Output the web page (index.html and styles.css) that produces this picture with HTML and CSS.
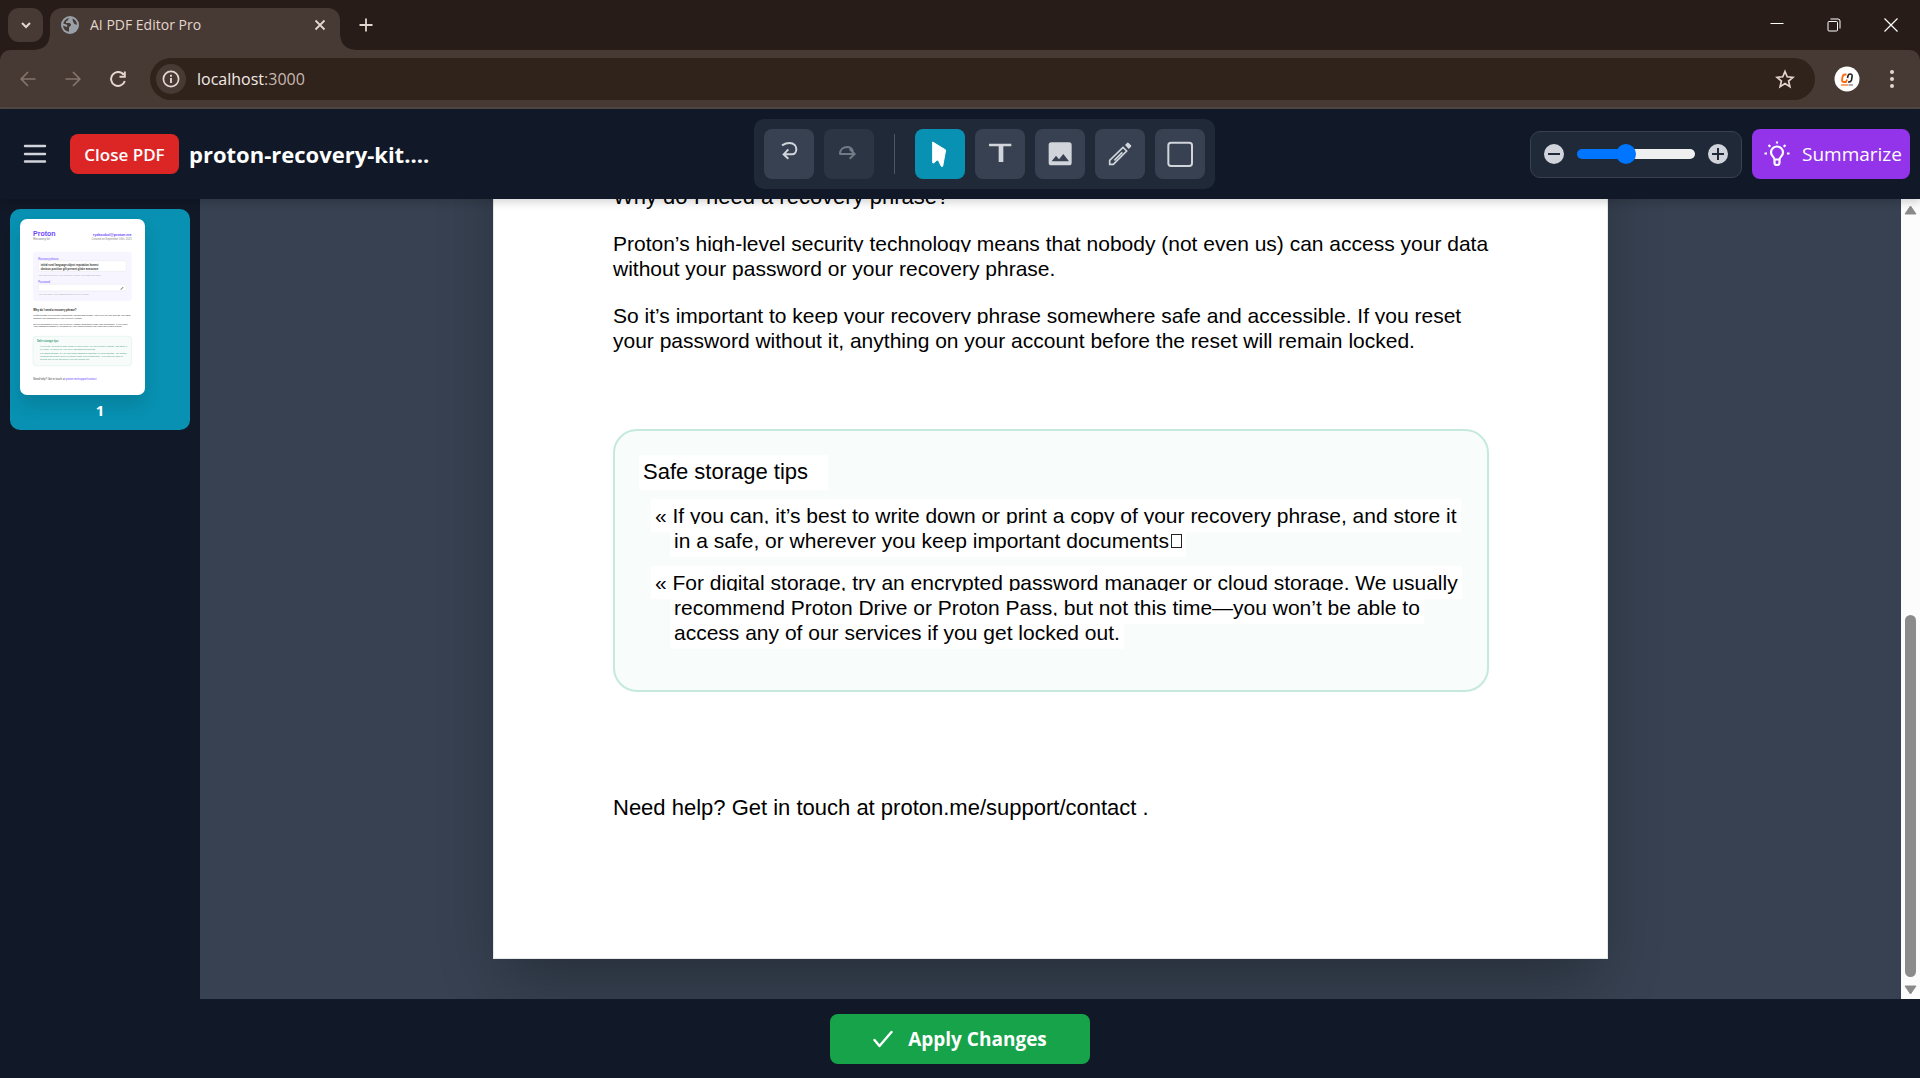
FILE: index.html
```html
<!DOCTYPE html>
<html lang="en">
<head>
<meta charset="utf-8">
<meta name="viewport" content="width=device-width, initial-scale=1">
<title>AI PDF Editor Pro</title>
<link rel="stylesheet" href="styles.css">
</head>
<body>
<div class="browser">
  <div class="tabstrip">
    <button class="tab-search" aria-label="Search tabs"><svg width="14" height="14" viewBox="0 0 14 14"><path d="M3 5l4 4 4-4" fill="none" stroke="currentColor" stroke-width="2"/></svg></button>
    <div class="tab">
      <svg width="18" height="18" viewBox="0 0 18 18"><circle cx="9" cy="9" r="9" fill="#9aa0a8"/><path d="M10 1.800Q7 2 7 4.500Q4.500 4.500 5 7H8.500Q10.500 7.500 10 9.500Q8 10 8 12V15.800Q2.500 15 2 9.500L5.500 11Q7 10.500 6 8.800L2.200 7.500Q3.500 2.500 10 1.800ZM11.500 2.500Q15.500 4 16 8.500Q14.500 9 13 7.500Q11.500 5.500 11.500 2.500Z" fill="#473933"/></svg>
      <span class="tab-title">AI PDF Editor Pro</span>
      <button class="plain" aria-label="Close tab"><svg width="12" height="12" viewBox="0 0 12 12"><path d="M1.500 1.500l9 9m0-9l-9 9" stroke="currentColor" stroke-width="1.800"/></svg></button>
    </div>
    <button class="plain new-tab" aria-label="New tab"><svg width="14" height="14" viewBox="0 0 14 14"><path d="M7 .5v13M.5 7h13" stroke="currentColor" stroke-width="1.800"/></svg></button>
    <div class="window-controls">
      <button class="plain" aria-label="Minimize"><svg width="14" height="14" viewBox="0 0 14 14"><path d="M.5 5.500h13" stroke="#fff" stroke-width="1"/></svg></button>
      <button class="plain" aria-label="Restore"><svg width="14" height="14" viewBox="0 0 14 14"><rect x="1" y="3.500" width="9.500" height="9.500" rx="1" fill="none" stroke="#fff"/><path d="M3.500 1h7.500q2 0 2 2v7.500" fill="none" stroke="#fff"/></svg></button>
      <button class="plain" aria-label="Close"><svg width="14" height="14" viewBox="0 0 14 14"><path d="M.5 .5l13 13m0-13l-13 13" stroke="#fff" stroke-width="1.200"/></svg></button>
    </div>
  </div>
  <div class="navbar">
    <div class="nav-buttons">
      <button class="plain dim" aria-label="Back"><svg width="16" height="16" viewBox="0 0 16 16"><path d="M15.500 8H1.500M8 1L1.200 8 8 15" fill="none" stroke="currentColor" stroke-width="1.700"/></svg></button>
      <button class="plain dim" aria-label="Forward"><svg width="16" height="16" viewBox="0 0 16 16"><path d="M.5 8h14M8 1l6.800 7L8 15" fill="none" stroke="currentColor" stroke-width="1.700"/></svg></button>
      <button class="plain" aria-label="Reload"><svg width="16" height="16" viewBox="0 0 16 16"><path d="M13.500 3.500A7 7 0 1 0 14.800 10M14.800 .5v5.300H9.500" fill="none" stroke="currentColor" stroke-width="2"/></svg></button>
    </div>
    <div class="omnibox">
      <span class="site-info"><svg width="18" height="18" viewBox="0 0 18 18"><circle cx="9" cy="9" r="7.600" fill="none" stroke="currentColor" stroke-width="1.700"/><path d="M9 8v5M9 4.800v1.900" stroke="currentColor" stroke-width="1.900"/></svg></span>
      <span class="url">localhost<span class="port">:3000</span></span>
      <button class="plain" aria-label="Bookmark"><svg width="20" height="20" viewBox="0 0 20 20"><path d="M10 2.500l2.200 5.300 5.700.5-4.300 3.700 1.300 5.600L10 14.600l-4.900 3 1.300-5.600-4.300-3.700 5.700-.5z" fill="none" stroke="currentColor" stroke-width="1.700"/></svg></button>
    </div>
    <button class="plain" aria-label="Profile"><svg width="26" height="26" viewBox="0 0 26 26"><circle cx="13" cy="13" r="12.500" fill="#fff"/><path d="M12.500 8.500H11Q9 8.500 8.500 11L8 14q0 2 2 2h2l1-2.500" fill="none" stroke="#ff6a13" stroke-width="1.800"/><path d="M13.500 12l.6-2.500q.4-1.500 2-1.500 2.400 0 2 2.500L17.500 14q-.5 2-2.500 2h-1" fill="none" stroke="#222" stroke-width="1.600"/><path d="M7 19h7" stroke="#ff8a4a" stroke-width="1.600"/><path d="M14.500 19h4.500" stroke="#999" stroke-width="1.600"/></svg></button>
    <button class="plain menu-dots" aria-label="Menu"><svg width="6" height="20" viewBox="0 0 6 20"><g fill="currentColor"><circle cx="3" cy="3" r="2"/><circle cx="3" cy="10" r="2"/><circle cx="3" cy="17" r="2"/></g></svg></button>
  </div>
</div>

<header class="app-header">
  <div class="header-left">
    <button class="plain hamburger" aria-label="Toggle sidebar"><svg width="24" height="20" viewBox="0 0 24 20"><path d="M2 2h20M2 10h20M2 17.500h20" stroke="currentColor" stroke-width="2.400" stroke-linecap="round"/></svg></button>
    <button class="close-pdf">Close PDF</button>
    <h1 class="file-name">proton-recovery-kit....</h1>
  </div>
  <div class="tools">
    <button class="tool" aria-label="Undo"><svg viewBox="0 0 150 150"><path d="M54 49C62 44 70 42 77 42C90 42 97 51 97 60C97 69 92 76 84 76H60M73 61L59 76L73 89" fill="none" stroke="currentColor" stroke-width="6"/></svg></button>
    <button class="tool" aria-label="Redo" disabled><svg viewBox="0 0 150 150"><path d="M48 75C48 61 58 54 70 54C78 54 84 59 87 67M46 75H90M77 60L92 75L77 89" fill="none" stroke="currentColor" stroke-width="6"/></svg></button>
    <span class="divider"></span>
    <button class="tool active" aria-label="Select"><svg viewBox="0 0 150 150"><path d="M53 39L92 63L83 112L79 112L70 94L66 93L56 102L53 101Z" fill="currentColor" stroke="currentColor" stroke-width="3" stroke-linejoin="round"/></svg></button>
    <button class="tool" aria-label="Text"><svg viewBox="0 0 150 150"><path d="M42 44H109V52H85V99H71V52H42Z" fill="currentColor"/></svg></button>
    <button class="tool" aria-label="Image"><svg viewBox="0 0 150 150"><path d="M49 40H102Q110 40 110 48V101Q110 109 102 109H49Q41 109 41 101V48Q41 40 49 40ZM50 97H102L85 75L72 91L63 80Z" fill="currentColor" fill-rule="evenodd"/></svg></button>
    <button class="tool" aria-label="Draw"><svg viewBox="0 0 150 150"><path d="M44 106V94L84 55L95 66L55 106ZM58 94L82 70" fill="none" stroke="currentColor" stroke-width="5"/><path d="M90 48L97 41Q99 40 101 42L108 49Q110 51 108 53L101 60Z" fill="currentColor"/></svg></button>
    <button class="tool" aria-label="Rectangle"><svg viewBox="0 0 150 150"><rect x="40" y="41" width="71" height="70" rx="8" fill="none" stroke="currentColor" stroke-width="6"/></svg></button>
  </div>
  <div class="header-right">
    <div class="zoom-box">
      <button class="plain" aria-label="Zoom out"><svg width="20" height="20" viewBox="0 0 20 20"><circle cx="10" cy="10" r="10" fill="currentColor"/><path d="M4 10h12" stroke="#1f2937" stroke-width="2"/></svg></button>
      <input class="zoom-range" type="range" min="0" max="100" value="40" aria-label="Zoom">
      <button class="plain" aria-label="Zoom in"><svg width="20" height="20" viewBox="0 0 20 20"><circle cx="10" cy="10" r="10" fill="currentColor"/><path d="M4 10h12M10 4v12" stroke="#1f2937" stroke-width="2"/></svg></button>
    </div>
    <button class="summarize"><svg width="26" height="26" viewBox="0 0 26 26"><path d="M10.500 18.500C10.500 16 7 15 7 11.500a6 6 0 0 1 12 0C19 15 15.500 16 15.500 18.500ZM10.500 18.500v3.500q0 2 2.500 2t2.500-2V18.500M.5 12.500h2.500M23 12.500h2.500M4.500 4l1.800 1.800M21.500 4l-1.800 1.800M13 .5v2" fill="none" stroke="currentColor" stroke-width="2.200"/></svg>Summarize</button>
  </div>
</header>

<main class="workspace">
  <aside class="sidebar">
    <button class="page-card">
      <svg class="thumb" viewBox="0 0 375 528" role="img" aria-label="Page 1">
        <text x="39" y="50" font-size="21" font-weight="700" fill="#6d4aff">Proton</text>
        <text x="40" y="64" font-size="9" fill="#777">Recovery kit</text>
        <text x="335" y="52" font-size="11" font-weight="700" fill="#6d4aff" text-anchor="end">ryakoubul@proton.me</text>
        <text x="335" y="64" font-size="8" fill="#888" text-anchor="end">Created on September 16th, 2025</text>
        <rect x="39" y="98" width="296" height="148" rx="10" fill="#f7f5ff"/>
        <text x="55" y="122" font-size="8" fill="#6d4aff">Recovery phrase</text>
        <rect x="55" y="125" width="264" height="32" rx="6" fill="#fff" stroke="#ddd"/>
        <g font-size="8" font-weight="700" fill="#333"><text x="62" y="142">initial rural language object reputation honest</text><text x="62" y="153">obvious position gift present globe announce</text></g>
        <text x="56" y="170" font-size="7" fill="#aaa">Use this to recover your account, unlock your data and more</text>
        <text x="55" y="191" font-size="8" fill="#6d4aff">Password</text>
        <rect x="55" y="196" width="264" height="20" rx="4" fill="#fff" stroke="#ddd"/>
        <path d="M301 211l8-8 2 2-8 8z" fill="#888"/>
        <text x="56" y="227" font-size="7" fill="#aaa">You can write your password here to keep it safe</text>
        <text x="40" y="277" font-size="8" font-weight="700" fill="#222">Why do I need a recovery phrase?</text>
        <g font-size="7" fill="#333">
          <text x="40" y="292">Proton’s high-level security technology means that nobody (not even us) can access your data</text>
          <text x="40" y="300">without your password or your recovery phrase.</text>
          <text x="40" y="317">So it’s important to keep your recovery phrase somewhere safe and accessible. If you reset</text>
          <text x="40" y="325">your password without it, anything on your account before the reset will remain locked.</text>
        </g>
        <rect x="39" y="352" width="296" height="88" rx="9" fill="#f7fcfa" stroke="#c3e7db"/>
        <text x="51" y="369" font-size="8" font-weight="700" fill="#3a9a7c">Safe storage tips</text>
        <g font-size="7" fill="#3d9a7d">
          <text x="60" y="384">If you can, it’s best to write down or print a copy of your recovery phrase, and store it</text>
          <text x="60" y="392">in a safe, or wherever you keep important documents</text>
          <text x="60" y="406">For digital storage, try an encrypted password manager or cloud storage. We usually</text>
          <text x="60" y="414">recommend Proton Drive or Proton Pass, but not this time—you won’t be able to</text>
          <text x="60" y="422">access any of our services if you get locked out.</text>
        </g>
        <text x="40" y="483" font-size="8" fill="#444">Need help? Get in touch at <tspan fill="#6d4aff">proton.me/support/contact</tspan></text>
      </svg>
      <span class="page-number">1</span>
    </button>
  </aside>
  <div class="viewer">
    <article class="page">
      <h2 class="line large">Why do I need a recovery phrase?</h2>
      <div class="lines para first">
        <span class="line">Proton’s high-level security technology means that nobody (not even us) can access your data</span>
        <span class="line">without your password or your recovery phrase.</span>
      </div>
      <div class="lines para">
        <span class="line">So it’s important to keep your recovery phrase somewhere safe and accessible. If you reset</span>
        <span class="line">your password without it, anything on your account before the reset will remain locked.</span>
      </div>
      <section class="tips">
        <h3 class="line large tips-title">Safe storage tips</h3>
        <div class="lines tip">
          <span class="line">« If you can, it’s best to write down or print a copy of your recovery phrase, and store it</span>
          <span class="line hang">in a safe, or wherever you keep important documents<i class="missing-glyph"></i></span>
        </div>
        <div class="lines tip">
          <span class="line">« For digital storage, try an encrypted password manager or cloud storage. We usually</span>
          <span class="line hang">recommend Proton Drive or Proton Pass, but not this time—you won’t be able to</span>
          <span class="line hang">access any of our services if you get locked out.</span>
        </div>
      </section>
      <p class="line large">Need help? Get in touch at proton.me/support/contact .</p>
    </article>
  </div>
  <div class="scrollbar">
    <svg width="13" height="10" viewBox="0 0 13 10"><path d="M6.500 1L12 9H1Z" fill="#8b8b8b" stroke="#8b8b8b" stroke-linejoin="round"/></svg>
    <div class="scroll-track"><div class="scroll-thumb"></div></div>
    <svg width="13" height="10" viewBox="0 0 13 10"><path d="M6.500 9L12 1H1Z" fill="#8b8b8b" stroke="#8b8b8b" stroke-linejoin="round"/></svg>
  </div>
</main>

<footer class="app-footer">
  <button class="apply"><svg width="20" height="18" viewBox="0 0 20 18"><path d="M1.500 10l5 6L18.500 2" fill="none" stroke="currentColor" stroke-width="2.400" stroke-linecap="round" stroke-linejoin="round"/></svg>Apply Changes</button>
</footer>
</body>
</html>
```
FILE: styles.css
```css
* { box-sizing: border-box; }

body {
  margin: 0;
  height: 100vh;
  display: flex;
  flex-direction: column;
  overflow: hidden;
  background: #111827;
  color: #fff;
  font-family: "Open Sans", "Noto Sans", sans-serif;
}

button { font: inherit; color: inherit; border: 0; padding: 0; cursor: pointer; }
svg { display: block; flex-shrink: 0; }
.plain { display: flex; align-items: center; justify-content: center; background: none; }

/* Browser frame */
.browser { flex-shrink: 0; background: #281c18; color: #e4d6cf; }
.tabstrip { display: flex; align-items: center; height: 50px; padding-left: 8px; }
.tab-search {
  width: 35px; height: 34px;
  display: flex; align-items: center; justify-content: center;
  border-radius: 11px;
  background: #473933;
}
.tab {
  position: relative;
  align-self: flex-end;
  display: flex;
  align-items: center;
  gap: 11px;
  width: 290px;
  height: 42px;
  margin-left: 7px;
  padding: 0 14px 8px 11px;
  border-radius: 12px 12px 0 0;
  background: #473933;
}
.tab::before, .tab::after {
  content: "";
  position: absolute;
  bottom: 0;
  width: 14px;
  height: 14px;
}
.tab::before { right: 100%; background: radial-gradient(circle at 0 0, transparent 13px, #473933 14px); }
.tab::after { left: 100%; background: radial-gradient(circle at 100% 0, transparent 13px, #473933 14px); }
.tab-title { flex: 1; font-size: 14px; line-height: 20px; }
.new-tab { margin-left: 19px; }
.window-controls { display: flex; gap: 43px; margin-left: auto; padding-right: 22px; }
.navbar {
  display: flex;
  align-items: center;
  height: 59px;
  padding: 0 25px 0 20px;
  border-bottom: 2px solid #504642;
  border-radius: 10px 10px 0 0;
  background: #473933;
}
.nav-buttons { display: flex; gap: 29px; }
.dim { color: #84756d; }
.omnibox {
  flex: 1;
  display: flex;
  align-items: center;
  gap: 11px;
  height: 42px;
  margin: 0 19px 0 24px;
  padding: 0 20px 0 6px;
  border-radius: 21px;
  background: #30231c;
}
.site-info {
  display: flex; align-items: center; justify-content: center;
  width: 30px; height: 30px;
  border-radius: 50%;
  background: #473933;
}
.url { flex: 1; font-size: 16px; line-height: 22px; color: #f3e9e4; }
.port { color: #c8b8b0; }
.menu-dots { margin-left: 29px; }

/* Application header */
.app-header {
  position: relative;
  z-index: 1;
  flex-shrink: 0;
  display: flex;
  align-items: center;
  justify-content: space-between;
  height: 90px;
  padding: 0 10px;
  background: #111827;
  box-shadow: 0 4px 8px rgba(0, 0, 0, .15);
  color: #d1d5db;
}
.header-left, .header-right { display: flex; align-items: center; gap: 10px; }
.hamburger { width: 50px; height: 50px; }
.close-pdf {
  width: 109px;
  height: 40px;
  border-radius: 8px;
  background: #dc2626;
  color: #fff;
  font-size: 17px;
  font-weight: 600;
}
.file-name {
  width: 250px;
  margin: 0;
  color: #fff;
  font-size: 22px;
  line-height: 35px;
  font-weight: 700;
  white-space: nowrap;
}
.tools {
  display: flex;
  align-items: center;
  gap: 10px;
  padding: 10px;
  border-radius: 10px;
  background: #1f2937;
}
.tool { width: 50px; height: 50px; border-radius: 8px; background: #374151; }
.tool svg { width: 50px; height: 50px; }
.tool:disabled { background: #2b3543; color: #737a86; }
.tool.active { background: #0891b2; color: #fff; }
.divider { width: 1px; height: 40px; margin: 0 10px; background: #4b5563; }
.zoom-box {
  display: flex;
  align-items: center;
  gap: 13px;
  height: 47px;
  padding: 0 13px;
  border: 1px solid #374151;
  border-radius: 10px;
  background: #1f2937;
}
.zoom-range {
  appearance: none;
  width: 118px;
  height: 20px;
  margin: 0;
  background: none;
}
.zoom-range::-webkit-slider-runnable-track {
  height: 10px;
  border-radius: 5px;
  background: linear-gradient(90deg, #0075ff 42%, #efefef 42%);
}
.zoom-range::-webkit-slider-thumb {
  appearance: none;
  width: 20px;
  height: 20px;
  margin-top: -5px;
  border-radius: 50%;
  background: #0075ff;
}
.summarize {
  display: flex;
  align-items: center;
  gap: 12px;
  width: 158px;
  height: 50px;
  padding-left: 12px;
  border-radius: 8px;
  background: #9333ea;
  color: #fff;
  font-size: 19px;
}

/* Workspace */
.workspace { flex: 1; min-height: 0; display: flex; }
.sidebar { width: 200px; padding: 10px; }
.page-card {
  display: flex;
  flex-direction: column;
  width: 100%;
  padding: 10px;
  border-radius: 10px;
  background: #0891b2;
}
.thumb {
  width: 125px;
  height: 176px;
  border-radius: 7px;
  background: #fff;
  box-shadow: 0 10px 18px rgba(0, 0, 0, .12);
  font-family: "Liberation Sans", sans-serif;
}
.page-number {
  align-self: center;
  margin-top: 5px;
  font-size: 15px;
  line-height: 20px;
  font-weight: 700;
}
.viewer {
  flex: 1;
  min-width: 0;
  display: flex;
  flex-direction: column;
  justify-content: flex-end;
  align-items: center;
  padding-bottom: 40px;
  overflow: hidden;
  background: #374151;
}
.page {
  flex-shrink: 0;
  display: flex;
  flex-direction: column;
  justify-content: flex-end;
  align-items: flex-start;
  width: 1115px;
  max-width: 100%;
  aspect-ratio: 1115 / 1577;
  padding: 0 118px 132px 115px;
  border: 1px solid #e5e7eb;
  background: #fff;
  box-shadow: 0 30px 60px -12px rgba(0, 0, 0, .3);
  color: #000;
  font-family: "Liberation Sans", Arial, sans-serif;
}
/* Each line carries its own white backing, which overlaps the line above */
.lines { display: flex; flex-direction: column; align-items: flex-start; }
.line {
  margin: 0;
  padding: 4px;
  background: #fff;
  font-size: 21px;
  line-height: 25px;
  font-weight: 400;
  white-space: nowrap;
}
.lines .line + .line { margin-top: -8px; }
.large { padding-bottom: 6px; font-size: 22px; }
.para { margin-top: 14px; }
.para.first { margin-top: 12px; }
.tips {
  display: flex;
  flex-direction: column;
  align-items: flex-start;
  align-self: stretch;
  margin: 72px 0 99px 4px;
  padding: 24px 24px 41px;
  border: 2px solid #c5e9dd;
  border-radius: 24px;
  background: #f8fcfb;
}
.tips-title { padding-right: 20px; }
.tip { margin: 9px 0 0 12px; }
.hang { margin-left: 19px; }
.missing-glyph {
  display: inline-block;
  width: 11px;
  height: 14px;
  margin-left: 2px;
  border: 1px solid #222;
}

/* Native-looking vertical scrollbar */
.scrollbar {
  display: flex;
  flex-direction: column;
  align-items: center;
  gap: 8px;
  width: 19px;
  padding: 6px 0 4px;
  background: #fcfcfc;
}
.scroll-track { flex: 1; display: flex; align-items: flex-end; }
.scroll-thumb { width: 11px; height: 48%; border-radius: 6px; background: #8b8b8b; }

.app-footer {
  flex-shrink: 0;
  display: flex;
  justify-content: center;
  padding: 15px 15px 14px;
}
.apply {
  display: flex;
  align-items: center;
  justify-content: center;
  gap: 15px;
  width: 260px;
  height: 50px;
  border-radius: 8px;
  background: #16a34a;
  color: #fff;
  font-size: 19px;
  font-weight: 700;
}
```
